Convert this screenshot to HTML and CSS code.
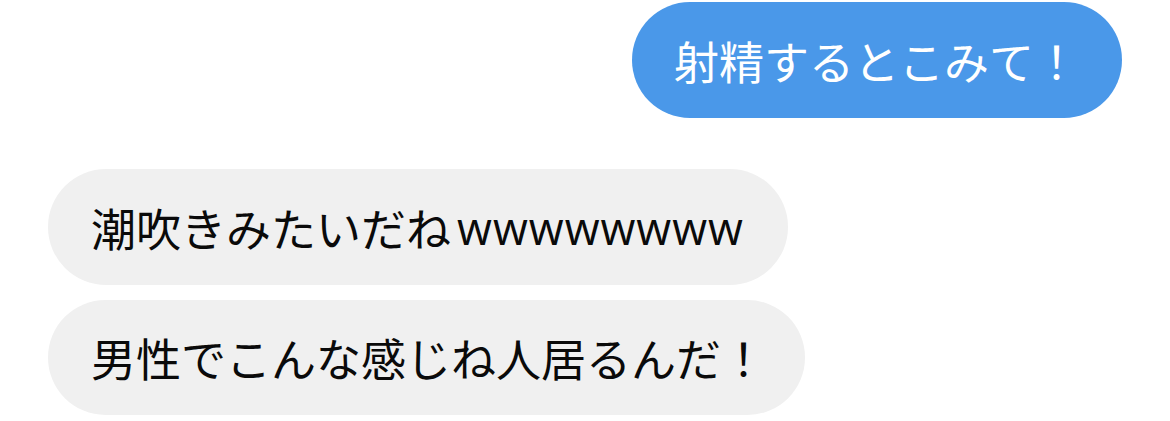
FILE: index.html
```html
<!DOCTYPE html>
<html lang="ja">
<head>
<meta charset="utf-8">
<link rel="stylesheet" href="styles.css">
</head>
<body>
<div class="chat">
  <div class="row row-out">
    <div class="bubble bubble-out">射精するとこみて！</div>
  </div>
  <div class="group-in">
    <div class="row row-in">
      <div class="bubble bubble-in bubble-first"><span>潮吹きみたいだね</span><span class="lat">wwwwwwww</span></div>
    </div>
    <div class="row row-in">
      <div class="bubble bubble-in">男性でこんな感じね人居るんだ！</div>
    </div>
  </div>
</div>
</body>
</html>
```
FILE: styles.css
```css
html, body {
  margin: 0;
  padding: 0;
  background: #ffffff;
}
body {
  width: 1170px;
  height: 421px;
  overflow: hidden;
  font-family: "Noto Sans CJK JP", "Noto Sans", sans-serif;
}
.chat {
  display: flex;
  flex-direction: column;
  padding: 2px 48px 0 48px;
  gap: 51px;
}
.row {
  display: flex;
}
.row-out {
  justify-content: flex-end;
}
.group-in {
  display: flex;
  flex-direction: column;
  gap: 15px;
}
.bubble {
  height: 116px;
  border-radius: 58px;
  display: flex;
  align-items: center;
  font-size: 45px;
  white-space: nowrap;
  box-sizing: border-box;
}
.bubble-out {
  background: #4a98e9;
  color: #ffffff;
  padding: 0 43px 0 42px;
}
.bubble-in {
  background: #f0f0f0;
  color: #0a0a0a;
  padding: 0 39px 0 43px;
  height: 115px;
}
.bubble-first {
  height: 116px;
  padding-right: 44px;
}
.lat {
  font-family: "Open Sans", "Noto Sans", sans-serif;
  letter-spacing: 1px;
  margin-left: 6px;
}
```
